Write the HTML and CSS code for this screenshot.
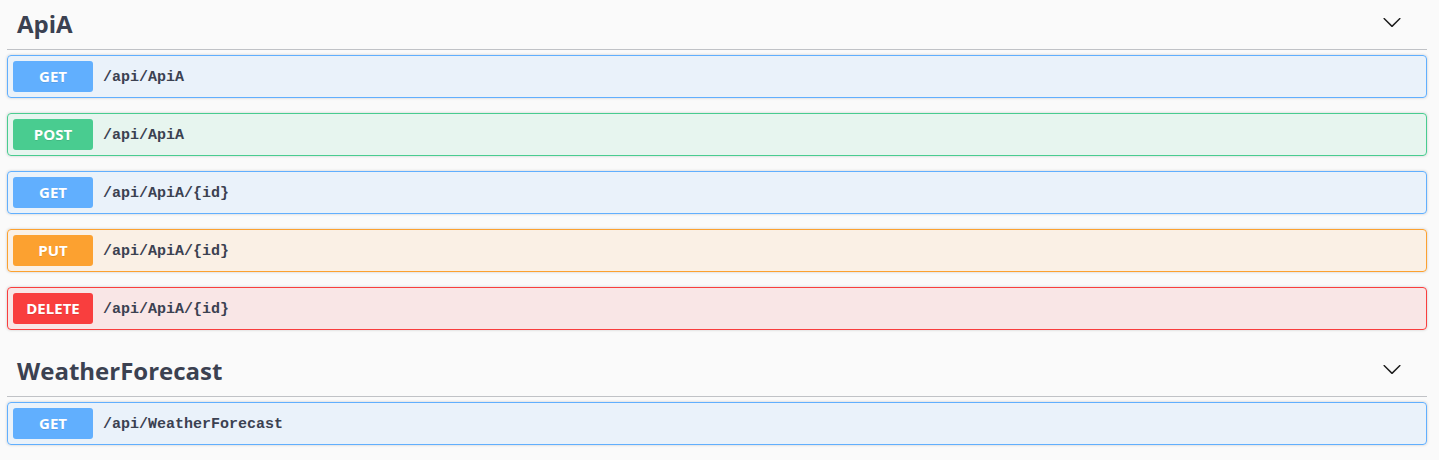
FILE: index.html
```html
<!DOCTYPE html>
<html lang="en">
<head>
<meta charset="utf-8">
<title>Swagger</title>
<link rel="stylesheet" href="styles.css">
</head>
<body>
<div class="wrapper">
  <section class="tag-section">
    <h3 class="tag">
      <span class="tag-name">ApiA</span>
      <button class="expand" aria-label="collapse">
        <svg class="arrow" width="20" height="20" viewBox="0 0 20 20"><path d="M17.418 6.109c.272-.268.709-.268.979 0s.271.701 0 .969l-7.908 7.83c-.27.268-.707.268-.979 0l-7.908-7.830c-.27-.268-.27-.701 0-.969.271-.268.709-.268.979 0L10 13.25l7.418-7.141z"/></svg>
      </button>
    </h3>
    <div class="opblock get"><span class="method">GET</span><span class="path">/api/ApiA</span></div>
    <div class="opblock post"><span class="method">POST</span><span class="path">/api/ApiA</span></div>
    <div class="opblock get"><span class="method">GET</span><span class="path">/api/ApiA/{id}</span></div>
    <div class="opblock put"><span class="method">PUT</span><span class="path">/api/ApiA/{id}</span></div>
    <div class="opblock delete"><span class="method">DELETE</span><span class="path">/api/ApiA/{id}</span></div>
  </section>
  <section class="tag-section">
    <h3 class="tag">
      <span class="tag-name">WeatherForecast</span>
      <button class="expand" aria-label="collapse">
        <svg class="arrow" width="20" height="20" viewBox="0 0 20 20"><path d="M17.418 6.109c.272-.268.709-.268.979 0s.271.701 0 .969l-7.908 7.83c-.27.268-.707.268-.979 0l-7.908-7.830c-.27-.268-.27-.701 0-.969.271-.268.709-.268.979 0L10 13.25l7.418-7.141z"/></svg>
      </button>
    </h3>
    <div class="opblock get"><span class="method">GET</span><span class="path">/api/WeatherForecast</span></div>
  </section>
</div>
</body>
</html>
```
FILE: styles.css
```css
html, body {
  margin: 0;
  padding: 0;
  background: #fafafa;
}
body {
  font-family: "Open Sans", "Noto Sans", sans-serif;
  color: #3b4151;
  overflow: hidden;
}
.wrapper {
  padding: 0 12px 0 7px;
  margin-top: -1px;
}
.tag-section {
  display: flex;
  flex-direction: column;
}
.tag-section + .tag-section {
  margin-top: 1px;
}
.tag {
  display: flex;
  align-items: center;
  height: 51px;
  box-sizing: border-box;
  margin: 0 0 5px;
  padding: 0 20px 0 10px;
  border-bottom: 1px solid rgba(59, 65, 81, 0.3);
  font-size: 24px;
  font-weight: 700;
  color: #3b4151;
}
.tag-name {
  flex: 1;
  position: relative;
  top: -1px;
}
.expand {
  border: none;
  background: none;
  padding: 0;
  margin: 0 5px 0 0;
  display: flex;
  position: relative;
  top: -2px;
}
.arrow {
  fill: #1b1b1b;
}
.opblock {
  display: flex;
  align-items: center;
  height: 43px;
  box-sizing: border-box;
  margin: 0 0 15px;
  padding: 5px;
  border: 1px solid;
  border-radius: 4px;
  box-shadow: 0 0 3px rgba(0, 0, 0, 0.19);
}
.method {
  min-width: 80px;
  height: 31px;
  line-height: 31px;
  text-align: center;
  border-radius: 3px;
  font-family: "Open Sans", "Noto Sans", sans-serif;
  font-size: 15px;
  font-weight: 700;
  color: #fff;
  text-shadow: 0 1px 0 rgba(0, 0, 0, 0.1);
}
.path {
  padding: 0 10px;
  font-family: "Liberation Mono", "DejaVu Sans Mono", monospace;
  font-size: 15px;
  font-weight: 700;
  color: #3b4151;
  position: relative;
  top: 1px;
}
.get { background: rgba(97, 175, 254, 0.1); border-color: #61affe; }
.get .method { background: #61affe; }
.post { background: rgba(73, 204, 144, 0.1); border-color: #49cc90; }
.post .method { background: #49cc90; }
.put { background: rgba(252, 161, 48, 0.1); border-color: #fca130; }
.put .method { background: #fca130; }
.delete { background: rgba(249, 62, 62, 0.1); border-color: #f93e3e; }
.delete .method { background: #f93e3e; }
```
